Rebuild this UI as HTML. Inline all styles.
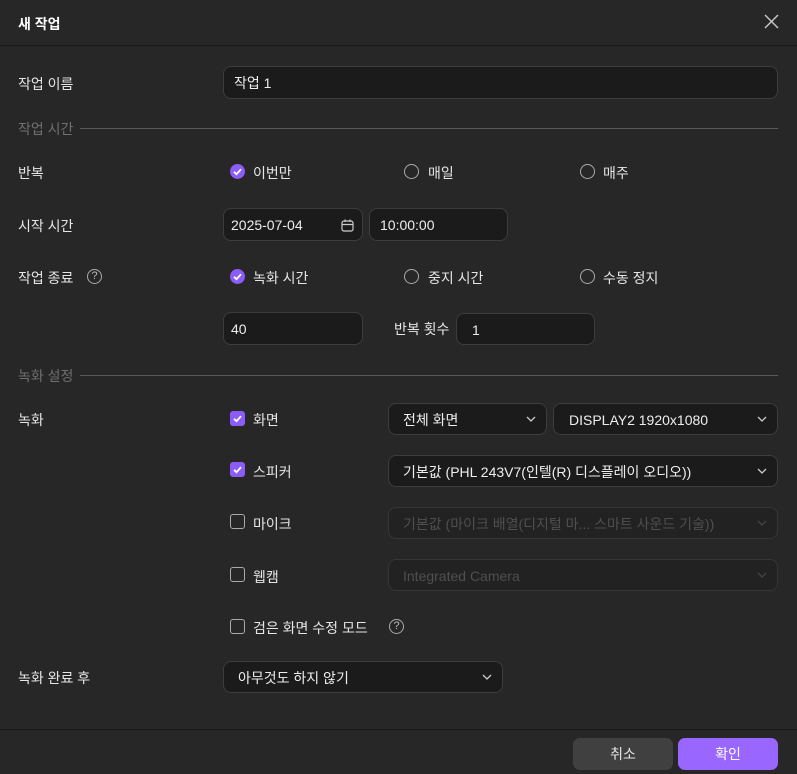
<!DOCTYPE html>
<html><head><meta charset="utf-8"><style>
*{box-sizing:border-box;margin:0;padding:0}
body{width:797px;height:774px;background:#272727;font-family:"Liberation Sans","Noto Sans CJK KR",sans-serif;font-size:14px;color:#e6e6e6;position:relative;overflow:hidden}
.a{position:absolute;white-space:nowrap}
.lbl{line-height:18px;margin-top:1px}
.in{position:absolute;background:#1b1b1b;border:1px solid #3d3d3d;border-radius:8px;padding-left:10px;display:flex;align-items:center;color:#eee;padding-top:1px}
.dis{color:#4f4f4f;background:#222;border-color:#363636}
.chev{position:absolute;right:10px;top:50%;margin-top:-4px;width:10px;height:8px}
.sec{color:#6f6f6f}
.line{position:absolute;height:1px;background:#5a5a5a}
.rad{position:absolute;width:15px;height:15px;border-radius:50%;border:1.5px solid #aaa}
.rad.on{background:#8b5cf6;border:none}
.cb{position:absolute;width:15px;height:15px;border-radius:3px;border:1.5px solid #aaa}
.cb.on{background:#8b5cf6;border:none}
.q{position:absolute;width:15px;height:15px;border-radius:50%;border:1px solid #aaa;font-size:11px;line-height:13px;text-align:center;color:#bbb}
</style></head><body>
<div class="a" style="left:18px;top:14px;font-weight:bold;font-size:14px;color:#fff">새 작업</div>
<svg class="a" style="left:764px;top:14px" width="15" height="15"><path d="M1 1L14 14M14 1L1 14" stroke="#ccc" stroke-width="1.4"/></svg>
<div class="line" style="left:0;top:45px;width:797px;background:#1a1a1a"></div>

<div class="a lbl" style="left:18px;top:74px">작업 이름</div>
<div class="in" style="left:223px;top:66px;width:555px;height:33px">작업 1</div>

<div class="a lbl sec" style="left:18px;top:119px">작업 시간</div>
<div class="line" style="left:80px;top:128px;width:698px"></div>

<svg width="0" height="0" style="position:absolute"><defs><path id="ck" d="M4 7.8L6.5 10.2L11 5.2" stroke="#fff" stroke-width="1.8" fill="none"/></defs></svg>

<div class="a lbl" style="left:18px;top:163px">반복</div>
<svg class="rad on" style="left:230px;top:164px" width="15" height="15"><use href="#ck"/></svg>
<div class="a lbl" style="left:253px;top:163px">이번만</div>
<div class="rad" style="left:404px;top:164px"></div>
<div class="a lbl" style="left:428px;top:163px">매일</div>
<div class="rad" style="left:580px;top:164px"></div>
<div class="a lbl" style="left:603px;top:163px">매주</div>

<div class="a lbl" style="left:18px;top:216px">시작 시간</div>
<div class="in" style="left:223px;top:208px;width:140px;height:33px;padding-left:7px">2025-07-04
<svg class="a" style="right:8px;top:10px" width="13" height="13"><rect x="1" y="2" width="11" height="10" rx="2" fill="none" stroke="#ccc" stroke-width="1.2"/><path d="M1 5.5H12M4 0.5V3M9 0.5V3" stroke="#ccc" stroke-width="1.2"/></svg></div>
<div class="in" style="left:369px;top:208px;width:139px;height:33px;padding-left:10px">10:00:00</div>

<div class="a lbl" style="left:18px;top:268px">작업 종료</div>
<div class="q" style="left:87px;top:269px">?</div>
<svg class="rad on" style="left:230px;top:269px" width="15" height="15"><use href="#ck"/></svg>
<div class="a lbl" style="left:253px;top:268px">녹화 시간</div>
<div class="rad" style="left:404px;top:269px"></div>
<div class="a lbl" style="left:428px;top:268px">중지 시간</div>
<div class="rad" style="left:580px;top:269px"></div>
<div class="a lbl" style="left:603px;top:268px">수동 정지</div>

<div class="in" style="left:223px;top:312px;width:140px;height:33px;padding-left:7px">40</div>
<div class="a lbl" style="left:394px;top:319px">반복 횟수</div>
<div class="in" style="left:456px;top:313px;width:139px;height:32px;padding-left:15px">1</div>

<div class="a lbl sec" style="left:18px;top:366px">녹화 설정</div>
<div class="line" style="left:80px;top:375px;width:698px"></div>

<div class="a lbl" style="left:18px;top:410px">녹화</div>
<svg class="cb on" style="left:230px;top:411px" width="15" height="15"><use href="#ck"/></svg>
<div class="a lbl" style="left:253px;top:410px">화면</div>
<div class="in" style="left:388px;top:403px;width:159px;height:32px;padding-left:14px">전체 화면<svg class="chev"><path d="M1 2L5 6L9 2" stroke="#ccc" stroke-width="1.3" fill="none"/></svg></div>
<div class="in" style="left:553px;top:403px;width:225px;height:32px;padding-left:15px">DISPLAY2 1920x1080<svg class="chev"><path d="M1 2L5 6L9 2" stroke="#ccc" stroke-width="1.3" fill="none"/></svg></div>

<svg class="cb on" style="left:230px;top:462px" width="15" height="15"><use href="#ck"/></svg>
<div class="a lbl" style="left:253px;top:462px">스피커</div>
<div class="in" style="left:388px;top:455px;width:390px;height:32px;padding-left:14px">기본값 (PHL 243V7(인텔(R) 디스플레이 오디오))<svg class="chev"><path d="M1 2L5 6L9 2" stroke="#ccc" stroke-width="1.3" fill="none"/></svg></div>

<div class="cb" style="left:230px;top:514px"></div>
<div class="a lbl" style="left:253px;top:514px">마이크</div>
<div class="in dis" style="left:388px;top:507px;width:390px;height:32px;padding-left:14px">기본값 (마이크 배열(디지털 마... 스마트 사운드 기술))<svg class="chev"><path d="M1 2L5 6L9 2" stroke="#444" stroke-width="1.3" fill="none"/></svg></div>

<div class="cb" style="left:230px;top:567px"></div>
<div class="a lbl" style="left:253px;top:567px">웹캠</div>
<div class="in dis" style="left:388px;top:559px;width:390px;height:32px;padding-left:14px">Integrated Camera<svg class="chev"><path d="M1 2L5 6L9 2" stroke="#444" stroke-width="1.3" fill="none"/></svg></div>

<div class="cb" style="left:230px;top:619px"></div>
<div class="a lbl" style="left:253px;top:618px">검은 화면 수정 모드</div>
<div class="q" style="left:389px;top:619px">?</div>

<div class="a lbl" style="left:18px;top:668px">녹화 완료 후</div>
<div class="in" style="left:223px;top:661px;width:280px;height:32px;padding-left:14px">아무것도 하지 않기<svg class="chev"><path d="M1 2L5 6L9 2" stroke="#ccc" stroke-width="1.3" fill="none"/></svg></div>

<div class="line" style="left:0;top:729px;width:797px;background:#1a1a1a"></div>
<div class="a" style="left:573px;top:738px;width:100px;height:32px;border-radius:7px;background:#404040;text-align:center;line-height:32px;font-size:14px">취소</div>
<div class="a" style="left:678px;top:738px;width:100px;height:32px;border-radius:7px;background:#9966ff;text-align:center;line-height:32px;font-size:14px;color:#fff">확인</div>
</body></html>
